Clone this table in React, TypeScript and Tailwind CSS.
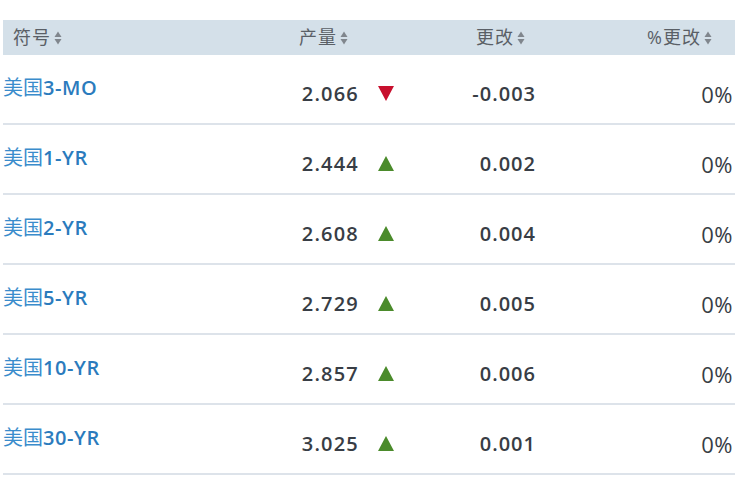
const rows = [
  { sym: "3-MO", yld: "2.066", chg: "-0.003", pct: "0%", up: false },
  { sym: "1-YR", yld: "2.444", chg: "0.002", pct: "0%", up: true },
  { sym: "2-YR", yld: "2.608", chg: "0.004", pct: "0%", up: true },
  { sym: "5-YR", yld: "2.729", chg: "0.005", pct: "0%", up: true },
  { sym: "10-YR", yld: "2.857", chg: "0.006", pct: "0%", up: true },
  { sym: "30-YR", yld: "3.025", chg: "0.001", pct: "0%", up: true },
];

const font = { fontFamily: '"Open Sans", "Noto Sans CJK SC", sans-serif' };

function SortIcon() {
  return (
    <svg width="8" height="14" viewBox="0 0 8 14" className="ml-[3px] inline-block">
      <path d="M4 0.5 L7.5 6 L0.5 6 Z" fill="#80868d" />
      <path d="M4 13.5 L7.5 8 L0.5 8 Z" fill="#80868d" />
    </svg>
  );
}

function Arrow({ up }: { up: boolean }) {
  return up ? (
    <svg width="16" height="15" viewBox="0 0 16 15">
      <path d="M8 0 L16 15 L0 15 Z" fill="#4b8b2b" />
    </svg>
  ) : (
    <svg width="16" height="15" viewBox="0 0 16 15">
      <path d="M0 0 L16 0 L8 15 Z" fill="#c8102e" />
    </svg>
  );
}

export default function App() {
  return (
    <div className="w-[740px] h-[494px] bg-white pt-[20px] pl-[3px]" style={font}>
      <div className="w-[732px]">
        <div className="h-[35px] bg-[#d4e0e9] flex items-center text-[18px] text-[#5a5f66] tracking-[1px]">
          <div className="w-[287px] pl-[10px] flex items-center">
            符号<SortIcon />
          </div>
          <div className="w-[58px] flex items-center justify-end">
            产量<SortIcon />
          </div>
          <div className="w-[177px] flex items-center justify-end">
            更改<SortIcon />
          </div>
          <div className="w-[187px] flex items-center justify-end">
            %更改<SortIcon />
          </div>
        </div>
        {rows.map((r, i) => (
          <div key={i} className="h-[70px] border-b-2 border-[#dde3ea] flex text-[20px]">
            <div className="w-[257px] pt-[23px] text-[#2b7bbd] leading-none">
              <span className="font-normal text-[#3a8ccc]">美国</span>
              <span className="font-semibold tracking-[0.6px]">{r.sym}</span>
            </div>
            <div className="w-[99px] pt-[29px] text-right font-semibold text-[#383d45] leading-none tracking-[1.2px]">
              {r.yld}
            </div>
            <div className="w-[19px]" />
            <div className="w-[16px] pt-[31px]">
              <Arrow up={r.up} />
            </div>
            <div className="w-[142px] pt-[29px] text-right font-semibold text-[#383d45] leading-none tracking-[1px]">
              {r.chg}
            </div>
            <div className="w-[197px] pt-[28px] text-right text-[22px] text-[#383d45] leading-none tracking-[0.5px]">
              {r.pct}
            </div>
          </div>
        ))}
      </div>
    </div>
  );
}
